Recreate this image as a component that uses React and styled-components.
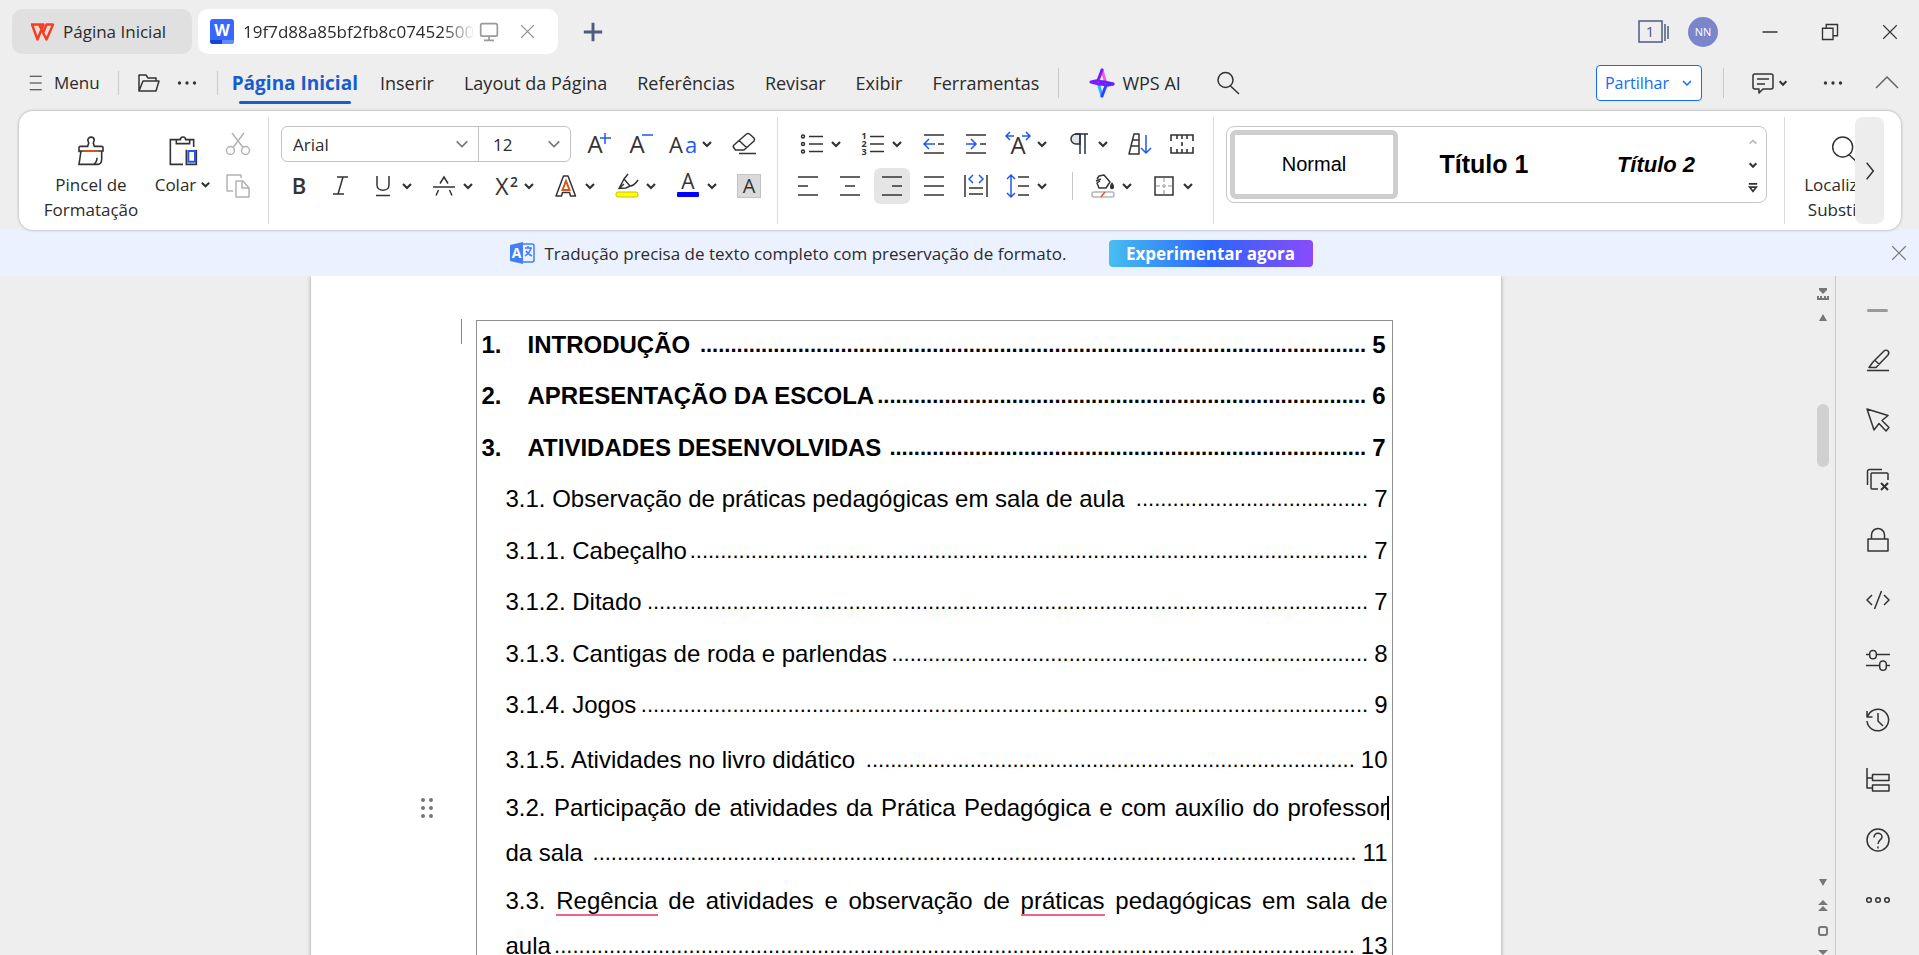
import React,{useState} from 'react'
import styled, {createGlobalStyle} from 'styled-components'

const uiFont = `'Open Sans', 'Noto Sans', sans-serif`
const docFont = `'Liberation Sans', Arial, sans-serif`

const tabs = ['Página Inicial','Inserir','Layout da Página','Referências','Revisar','Exibir','Ferramentas']

const misspelled = ['Regência', 'práticas']

const entries = [
  { number: '1.', text: 'INTRODUÇÃO', page: 5, dots: 109, main: true, gap: 6 },
  { number: '2.', text: 'APRESENTAÇÃO DA ESCOLA', page: 6, dots: 80, main: true, gap: 7 },
  { number: '3.', text: 'ATIVIDADES DESENVOLVIDAS', page: 7, dots: 78, main: true, gap: 6 },
  { text: '3.1. Observação de práticas pedagógicas em sala de aula', page: 7, dots: 38, gap: 7 },
  { text: '3.1.1. Cabeçalho', page: 7, dots: 111, gap: 6 },
  { text: '3.1.2. Ditado', page: 7, dots: 118, gap: 7 },
  { text: '3.1.3. Cantigas de roda e parlendas', page: 8, dots: 78, gap: 6 },
  { text: '3.1.4. Jogos', page: 9, dots: 119, gap: 10 },
  { text: '3.1.5. Atividades no livro didático', page: 10, dots: 80, gap: 3 },
  { first: '3.2. Participação de atividades da Prática Pedagógica e com auxílio do professor', caret: true, text: 'da sala', page: 11, dots: 125, gap: 3 },
  { first: '3.3. Regência de atividades e observação de práticas pedagógicas em sala de', text: 'aula', page: 13, dots: 131, gap: 3 },
]

/* ---------- icons ---------- */

const Icon = ({ size = 24, children, color = '#333', width = '1.5', ...rest }) => (
  <svg width={size} height={size} viewBox='0 0 24 24' fill='none' stroke={color} strokeWidth={width} aria-hidden='true' {...rest}>
    {children}
  </svg>
)

const Letter = ({ x = 12, y = 20, size = 22, color = '#333', children, ...rest }) => (
  <text x={x} y={y} fontSize={size} fill={color} stroke='none' textAnchor='middle' fontFamily={uiFont} {...rest}>{children}</text>
)

const Chevron = ({ size = 12, color = '#333', width = '2.2' }) => (
  <svg width={size} height={size} viewBox='0 0 12 12' fill='none' stroke={color} strokeWidth={width} aria-hidden='true'>
    <path d='M2 4l4 4 4-4' />
  </svg>
)

const CloseIcon = ({ size = 18, color = '#333' }) => (
  <Icon size={size} color={color}><path d='M3 3l18 18M21 3L3 21' /></Icon>
)

const WpsLogo = () => (
  <svg width='25' height='18' viewBox='0 0 25 18' fill='none' stroke='#fb3b1e' strokeWidth='2.4' strokeLinejoin='round' aria-hidden='true'>
    <path d='M1 1.500h12.500L7.500 16.500 2 1.500M9 1.500l7.500 15 6.500-15h-6.500L13.500 9' />
  </svg>
)

const WriterLogo = () => (
  <svg width='24' height='25' viewBox='0 0 24 25' aria-hidden='true'>
    <rect width='24' height='25' rx='3' fill='#3a66ff' />
    <path d='M0 21h12v4H3a3 3 0 0 1-3-3z' fill='#0f47d6' />
    <path d='M12 21h12v1a3 3 0 0 1-3 3h-9z' fill='#5e8eff' />
    <text x='12' y='17' fontSize='16' fontWeight='700' fill='#fff' textAnchor='middle' fontFamily={uiFont}>W</text>
  </svg>
)

const AiLogo = () => (
  <svg width='26' height='30' viewBox='0 0 26 30' fill='none' strokeWidth='3' strokeLinecap='round' strokeLinejoin='round' aria-hidden='true'>
    <path d='M13 2l3 10' stroke='#ee62da' />
    <path d='M13 28l-3-10' stroke='#27b8ff' />
    <path d='M2 14l7-1.500L13 2M2 14l8 2 5 .5' stroke='#7a1cff' />
    <path d='M24 16l-7 1.500L13 28' stroke='#3b3bff' />
    <path d='M24 16l-8-2-5-.5' stroke='#6a1dff' />
  </svg>
)

const MenuIcon = () => <Icon size={18}><path d='M5 3h16M5 12h16M5 21h16' /></Icon>

const FolderIcon = () => <Icon><path d='M2 20V4h7l2 3h8v3M2 20L6 10h16l-3 10z' strokeLinejoin='round' /></Icon>

const DotsIcon = ({ size = 20 }) => (
  <Icon size={size}><g fill='#333' stroke='none'><circle cx='3' cy='12' r='2' /><circle cx='12' cy='12' r='2' /><circle cx='21' cy='12' r='2' /></g></Icon>
)

const SearchIcon = ({ size = 24, width }) => <Icon size={size} width={width}><circle cx='9.500' cy='9' r='7.500' /><path d='M14.500 15l8.500 8' /></Icon>

const BrushIcon = () => (
  <Icon size={32}>
    <path d='M3 13V9.500a1 1 0 0 1 1-1h5.500l.8-2.500-.7-2a2.400 2.400 0 1 1 4.800 0l-.7 2 .8 2.500H20a1 1 0 0 1 1 1V12H3zM4.500 12L3 22h14c2 0 3-1.500 3-4V12M16.500 17c0 2-1 4-2.500 5' strokeWidth='1.200' />
    <path d='M6.500 12h11' stroke='#d4541b' />
  </Icon>
)

const PasteIcon = () => (
  <Icon size={32} width='1.200'>
    <path d='M7 3.500H2.500V22H12M17 3.500h3V9M7 3.500v3h10v-3h-3C14 .8 10 .8 10 3.500z' />
    <path d='M14.500 11v11H22V11' />
    <path d='M16 12h5v8h-5z' stroke='#2257f0' strokeWidth='1.500' />
  </Icon>
)

const CutIcon = () => <Icon color='#b3b3b3'><circle cx='4.500' cy='18.500' r='4' /><circle cx='19.500' cy='18.500' r='4' /><path d='M6 1l11 14.500M18 1L7 15.500' /></Icon>

const CopyIcon = () => <Icon color='#b3b3b3'><path d='M7 17H1V1h14v3M10 7h7l6 7v9H10zM16 7v7h7' strokeLinejoin='round' /></Icon>

const GrowIcon = () => <Icon><Letter x={8} y={21} size={24}>A</Letter><path d='M18 1v11M13 6h11' stroke='#2257f0' /></Icon>

const ShrinkIcon = () => <Icon><Letter x={8} y={21} size={24}>A</Letter><path d='M13 3h11' stroke='#2257f0' /></Icon>

const CaseIcon = () => <Icon><Letter x={5} y={21} size={22}>A</Letter><Letter x={20} y={21} size={22} color='#2257f0'>a</Letter></Icon>

const EraserIcon = () => <Icon><path d='M3.500 18h8.500L22 9c.7-1 .7-2 0-3l-4.500-4c-1-.8-2-.8-3 0L2 13c-1 1-1 2 0 3zM7 8.500l7.500 7M7 21.500h17' strokeLinejoin='round' /></Icon>

const BoldIcon = () => <Icon><Letter size={22} y={20} fontWeight='600'>B</Letter></Icon>

const ItalicIcon = () => <Icon><path d='M8 3h11M4 20h11M14 3L9 20' /></Icon>

const UnderlineIcon = () => <Icon><path d='M6 2v9c0 7 12 7 12 0V2M5 21.500h14' /></Icon>

const StrikeIcon = () => <Icon><path d='M1 13h22M8 9.500L12 3l4 6.500M6.500 16L4 21.500M17.500 16l2.500 5.500' /></Icon>

const SuperIcon = () => <Icon><Letter x={9} y={21} size={23}>X</Letter><Letter x={21} y={13} size={14} fontWeight='600'>2</Letter></Icon>

const OutlineIcon = () => (
  <Icon>
    <path d='M2 22L9.500 2h4.500L21.500 22h-5l-1-3.500h-7L7.500 22z' strokeLinejoin='round' />
    <path d='M8.500 16L12 7l3.500 9z' stroke='#d4541b' strokeWidth='2' />
  </Icon>
)

const HighlightIcon = () => (
  <Icon>
    <path d='M4 14.500L9 5l6 7-4 2zM9 5l4-5M15 12c4 0 6-3 8-6M9 10l-5 4.500' />
    <rect x='1' y='18' width='22' height='5' rx='2' fill='#ffff00' stroke='#c9c100' strokeWidth='1' />
  </Icon>
)

const FontColorIcon = () => (
  <Icon>
    <Letter y={15} size={21}>A</Letter>
    <rect x='1' y='18' width='22' height='5' rx='1' fill='#0000ff' stroke='none' />
  </Icon>
)

const ShadeIcon = () => (
  <Icon>
    <rect x='0.500' y='0.500' width='23' height='23' fill='#dadada' stroke='#c3c3c3' strokeWidth='1' />
    <Letter y={19} size={20}>A</Letter>
  </Icon>
)

const BulletsIcon = () => <Icon><g><circle cx='3' cy='4.500' r='1.500' /><circle cx='3' cy='12' r='1.500' /><circle cx='3' cy='19.500' r='1.500' /></g><path d='M9 4.500h14M9 12h14M9 19.500h14' /></Icon>

const NumbersIcon = () => (
  <Icon>
    <Letter x={3} y={7} size={9} fontWeight='700'>1</Letter>
    <Letter x={3} y={15} size={9} fontWeight='700'>2</Letter>
    <Letter x={3} y={23} size={9} fontWeight='700'>3</Letter>
    <path d='M9 4.500h14M9 12h14M9 19.500h14' />
  </Icon>
)

const OutdentIcon = () => <Icon><path d='M2 3h20M2 21h20M16 12h6' /><path d='M2 12h11M7 7l-5 5 5 5' stroke='#2257f0' /></Icon>

const IndentIcon = () => <Icon><path d='M2 3h20M2 21h20M16 12h6' /><path d='M2 12h10M7 7l5 5-5 5' stroke='#2257f0' /></Icon>

const TextWidthIcon = () => (
  <Icon>
    <Letter y={22} size={24}>A</Letter>
    <path d='M0 4h8M4 0L0 4l4 4M24 4h-8M20 0l4 4-4 4' stroke='#2257f0' />
  </Icon>
)

const PilcrowIcon = () => <Icon><path d='M13 2H9a5 5 0 0 0 0 10h4z' fill='#dfe3ea' /><path d='M13 2v20M18 2v20M8 2h13' stroke='#27314d' /></Icon>

const SortIcon = () => (
  <Icon>
    <path d='M1 22L6 2h5v20zM4.500 8H11M3 14h8' strokeLinejoin='round' />
    <path d='M18 3v18M13 16l5 5 5-5' stroke='#2257f0' />
  </Icon>
)

const TabStopIcon = () => <Icon width='1.600'><path d='M1 9V3h22v6M1 15v6h22v-6M7 3v4M12 3v4M17 3v4M7 21v-4M12 21v-4M17 21v-4M12 10v4' /></Icon>

const AlignIcon = ({ d }) => <Icon><path d={d} /></Icon>

const DistributeIcon = () => <Icon><path d='M1 1v22M23 1v22M5 14h14M5 20h14' /><path d='M9 1L5 5l4 4M15 1l4 4-4 4' stroke='#2257f0' /></Icon>

const SpacingIcon = () => <Icon><path d='M12 3h11M12 12h11M12 21h11' /><path d='M5 1v22M1 5l4-4 4 4M1 19l4 4 4-4' stroke='#2257f0' /></Icon>

const FillIcon = () => (
  <Icon>
    <path d='M6 5l2-3 5-1 6 7-4 6H8L6 9l3-2M5 7l5-2' strokeLinejoin='round' />
    <path d='M21 9.500c1.500 2 2 5 0 5s-1.500-3 0-5z' fill='#333' />
    <rect x='1' y='18' width='22' height='5' rx='2' stroke='#b5b5b5' />
    <path d='M10 23l4-5' stroke='#e2572b' />
  </Icon>
)

const BordersIcon = () => <Icon><path d='M3 3h18v18H3z' /><path d='M12 4v16M4 12h16' stroke='#b5b5b5' strokeDasharray='4 2' /></Icon>

const CommentIcon = () => <Icon><path d='M4 3h16a2 2 0 0 1 2 2v11a2 2 0 0 1-2 2h-8l-4 4v-4H4a2 2 0 0 1-2-2V5a2 2 0 0 1 2-2zM6 8h12M6 13h8' strokeLinejoin='round' /></Icon>

const TranslateIcon = () => (
  <svg width='25' height='22' viewBox='0 0 25 22' aria-hidden='true'>
    <path d='M0 3l13-3v22L0 19z' fill='#417ff9' />
    <path d='M13 2h9a2 2 0 0 1 2 2v14a2 2 0 0 1-2 2h-9' fill='none' stroke='#417ff9' strokeWidth='1.500' />
    <path d='M15 6h7M18 4v2M21 6c-1 4-3 6-6 8M16 9c2 3 4 4 6 5' fill='none' stroke='#417ff9' strokeWidth='1.500' />
    <text x='6.500' y='16' fontSize='14' fontWeight='700' fill='#fff' textAnchor='middle' fontFamily={uiFont}>A</text>
  </svg>
)

const sideTools = [
  ['Caneta', <path d='M1 22.500h22M3 19.500h7L22 7c1-1.500 1-3 0-4s-3-1-4 0L7 14zM9 12.500l4.500 4' />],
  ['Selecionar', <path d='M1 1l21 6.500-6 5L23 19.500 20 23l-7-7.500L8 22z' />],
  ['Cópias', <><path d='M1.500 17V3.500a2 2 0 0 1 2-2H16M12 21H6a1 1 0 0 1-1-1V6a1 1 0 0 1 1-1h15a1 1 0 0 1 1 1v6' /><path d='M15 15l7 7M22 15l-7 7' strokeWidth='2' /></>],
  ['Proteger', <path d='M2 11h20v12H2zM5.500 11V7a6.500 6.500 0 0 1 13 0v4' />],
  ['Código', <path d='M6 7l-5 5 5 5M18 7l5 5-5 5M15.500 3L8.500 21' />],
  ['Ajustes', <path d='M0 6.500h3.500M10.500 6.500H24M0 17.500h13.500M20.500 17.500H24M7 2.500a3 3 0 0 1 3.300 3v2a3 3 0 0 1-6.600 0v-2A3 3 0 0 1 7 2.500zM17 13a3 3 0 0 1 3.300 3v3a3 3 0 0 1-6.600 0v-3A3 3 0 0 1 17 13z' />],
  ['Histórico', <path d='M1 13a10.800 10.800 0 1 0 3-8.500L1 9M1 3v6h5.500M12 5v8l5 5' />],
  ['Navegação', <path d='M1 0v20h5M1 10h5M6.500 6.500H23v6H6.500zM6.500 17H23v6H6.500z' />],
  ['Ajuda', <><circle cx='12' cy='12' r='11' /><path d='M8 9.500c0-6 8-5 8-.5 0 3-4 3-4 7M12 18.500v2' /></>],
  ['Mais', <><circle cx='3' cy='12' r='2.300' /><circle cx='12' cy='12' r='2.300' /><circle cx='21' cy='12' r='2.300' /></>],
]

/* ---------- pieces ---------- */

const Tool = ({ label, drop, active, children }) => (
  <ToolButton type='button' aria-label={label} $drop={drop} $active={active}>
    <span>{children}</span>
    {drop ? <Chevron /> : null}
  </ToolButton>
)

const Entry = ({ number, first, caret, text, page, dots, main, gap }) => (
  <EntryBlock $main={main} $gap={gap}>
    { !first ? null:
      <Justified>
        {first.split(' ').map((word,index) => (
          <React.Fragment key={index}>
            {index ? ' ' : ''}
            {misspelled.includes(word) ? <Misspelled>{word}</Misspelled> : word}
          </React.Fragment>
        ))}
        {caret ? <Caret /> : null}
      </Justified>
    }
    <EntryLine>
      {number ? <Num>{number}</Num> : null}
      <span>{text}</span>
      <Leader aria-hidden='true'>{'.'.repeat(dots)}</Leader>
      <span>{page}</span>
    </EntryLine>
  </EntryBlock>
)

const App = () => {
  const [tab,setTab] = useState('Página Inicial')
  const [font,setFont] = useState('Arial')
  const [size,setSize] = useState('12')

  return (
    <Window>
      <GlobalStyle />
      <TitleBar>
        <FileTab type='button'>
          <WpsLogo />
          <span>Página Inicial</span>
        </FileTab>
        <OpenFile>
          <WriterLogo />
          <FileName>19f7d88a85bf2fb8c07452500</FileName>
          <Icon size={20} color='#999' width='2'><path d='M4 2h16a2 2 0 0 1 2 2v11a2 2 0 0 1-2 2H4a2 2 0 0 1-2-2V4a2 2 0 0 1 2-2zM12 17v4M6 22h12' /></Icon>
          <IconButton type='button' aria-label='Fechar separador'><CloseIcon size={17} color='#888' /></IconButton>
        </OpenFile>
        <NewTab type='button' aria-label='Novo separador'>
          <Icon size={20} color='#4c5b7e' width='3.500'><path d='M12 1v22M1 12h22' /></Icon>
        </NewTab>
        <WindowTools>
          <svg width='31' height='24' viewBox='0 0 31 24' fill='none' stroke='#4c5b7e' strokeWidth='1.500' aria-hidden='true'>
            <path d='M1 1h23v21H1zM27 4v17M30 6v13' />
            <text x='12' y='17' fontSize='15' fill='#4c5b7e' stroke='none' textAnchor='middle' fontFamily={uiFont}>1</text>
          </svg>
          <Avatar>NN</Avatar>
          <IconButton type='button' aria-label='Minimizar'><Icon size={18}><path d='M2 12h20' strokeWidth='2' /></Icon></IconButton>
          <IconButton type='button' aria-label='Restaurar'><Icon size={18} width='1.800'><path d='M2 7h14v15H2zM7 7V2h15v15h-6' /></Icon></IconButton>
          <IconButton type='button' aria-label='Fechar'><CloseIcon /></IconButton>
        </WindowTools>
      </TitleBar>

      <MenuBar>
        <MenuButton type='button'><MenuIcon /> Menu</MenuButton>
        <Bar $h={24} />
        <IconButton type='button' aria-label='Abrir'><FolderIcon /></IconButton>
        <IconButton type='button' aria-label='Mais'><DotsIcon /></IconButton>
        <Bar $h={24} />
        <TabList>
          {tabs.map((name) => (
            <MenuTab key={name} type='button' $active={name === tab} onClick={() => setTab(name)}>{name}</MenuTab>
          ))}
        </TabList>
        <Bar $h={30} />
        <AiButton type='button'><AiLogo /> WPS AI</AiButton>
        <IconButton type='button' aria-label='Pesquisar'><SearchIcon /></IconButton>
        <MenuRight>
          <ShareButton type='button'>Partilhar <Chevron color='#0f6bff' width='1.500' /></ShareButton>
          <Bar $h={30} />
          <CommentButton type='button' aria-label='Comentários'><CommentIcon /><Chevron size={10} width='2.500' /></CommentButton>
          <IconButton type='button' aria-label='Mais opções'><DotsIcon /></IconButton>
          <IconButton type='button' aria-label='Recolher'><Icon color='#666'><path d='M1 17L12 6l11 11' /></Icon></IconButton>
        </MenuRight>
      </MenuBar>

      <Ribbon>
        <Clipboard>
          <BigButton type='button' $w={96}><BrushIcon />Pincel de Formatação</BigButton>
          <BigButton type='button' $w={74}><PasteIcon /><span>Colar <Chevron size={11} /></span></BigButton>
          <ToolColumn>
            <IconButton type='button' aria-label='Cortar'><CutIcon /></IconButton>
            <IconButton type='button' aria-label='Copiar'><CopyIcon /></IconButton>
          </ToolColumn>
        </Clipboard>

        <FontGroup>
          <ToolRow $lead={3}>
            <Combo>
              <Picker $w={196}>
                <select aria-label='Tipo de letra' value={font} onChange={(e) => setFont(e.target.value)}>
                  <option>Arial</option>
                  <option>Times New Roman</option>
                </select>
                <Chevron size={16} color='#777' width='1.200' />
              </Picker>
              <Picker $w={92}>
                <select aria-label='Tamanho' value={size} onChange={(e) => setSize(e.target.value)}>
                  <option>12</option>
                  <option>14</option>
                </select>
                <Chevron size={16} color='#777' width='1.200' />
              </Picker>
            </Combo>
            <Tool label='Aumentar letra'><GrowIcon /></Tool>
            <Tool label='Diminuir letra'><ShrinkIcon /></Tool>
            <Tool label='Maiúsculas' drop><CaseIcon /></Tool>
            <Tool label='Limpar formatação'><EraserIcon /></Tool>
          </ToolRow>
          <ToolRow>
            <Tool label='Negrito'><BoldIcon /></Tool>
            <Tool label='Itálico'><ItalicIcon /></Tool>
            <Tool label='Sublinhado' drop><UnderlineIcon /></Tool>
            <Tool label='Rasurado' drop><StrikeIcon /></Tool>
            <Tool label='Sobrescrito' drop><SuperIcon /></Tool>
            <Tool label='Efeitos' drop><OutlineIcon /></Tool>
            <Tool label='Realce' drop><HighlightIcon /></Tool>
            <Tool label='Cor da letra' drop><FontColorIcon /></Tool>
            <Tool label='Sombreado'><ShadeIcon /></Tool>
          </ToolRow>
        </FontGroup>

        <ParagraphGroup>
          <ToolRow $lead={5}>
            <Tool label='Marcas' drop><BulletsIcon /></Tool>
            <Tool label='Numeração' drop><NumbersIcon /></Tool>
            <Tool label='Diminuir recuo'><OutdentIcon /></Tool>
            <Tool label='Aumentar recuo'><IndentIcon /></Tool>
            <Tool label='Largura do texto' drop><TextWidthIcon /></Tool>
            <Tool label='Marcas de parágrafo' drop><PilcrowIcon /></Tool>
            <Tool label='Ordenar'><SortIcon /></Tool>
            <Tool label='Tabulações'><TabStopIcon /></Tool>
          </ToolRow>
          <ToolRow $lead={1}>
            <Tool label='Alinhar à esquerda'><AlignIcon d='M2 3h20M2 12h10M2 21h20' /></Tool>
            <Tool label='Centrar'><AlignIcon d='M2 3h20M7 12h10M2 21h20' /></Tool>
            <Tool label='Alinhar à direita' active><AlignIcon d='M2 3h20M12 12h10M2 21h20' /></Tool>
            <Tool label='Justificar'><AlignIcon d='M2 3h20M2 12h20M2 21h20' /></Tool>
            <Tool label='Distribuir'><DistributeIcon /></Tool>
            <Tool label='Espaçamento' drop><SpacingIcon /></Tool>
            <Bar $h={28} />
            <Tool label='Preenchimento' drop><FillIcon /></Tool>
            <Tool label='Limites' drop><BordersIcon /></Tool>
          </ToolRow>
        </ParagraphGroup>

        <StyleGroup>
          <Gallery>
            <StyleItem type='button' $active>Normal</StyleItem>
            <StyleItem type='button' $title>Título 1</StyleItem>
            <StyleItem type='button' $subtitle>Título 2</StyleItem>
            <GalleryArrows>
              <button type='button' aria-label='Anterior'><svg width='10' height='10' viewBox='0 0 12 12' fill='none' stroke='#bbb' strokeWidth='2'><path d='M2 8l4-4 4 4' /></svg></button>
              <button type='button' aria-label='Seguinte'><Chevron size={10} width='2.500' /></button>
              <button type='button' aria-label='Mais estilos'><svg width='10' height='10' viewBox='0 0 12 12' fill='none' stroke='#333' strokeWidth='2'><path d='M1 1h10M2 5h8l-4 5z' /></svg></button>
            </GalleryArrows>
          </Gallery>
        </StyleGroup>

        <FindGroup>
          <BigButton type='button' $w={96}><SearchIcon size={32} width='1.100' />Localizar e Substituir</BigButton>
        </FindGroup>
        <NextButton type='button' aria-label='Mais ferramentas'>
          <Icon size={20} width='1.800'><path d='M8 2l8 10-8 10' /></Icon>
        </NextButton>
      </Ribbon>

      <Banner>
        <TranslateIcon />
        <p>Tradução precisa de texto completo com preservação de formato.</p>
        <TryButton type='button'>Experimentar agora</TryButton>
        <BannerClose type='button' aria-label='Fechar aviso'><CloseIcon size={18} color='#777' /></BannerClose>
      </Banner>

      <Workspace>
        <Canvas>
          <Page>
            <CornerMark />
            <Handle aria-hidden='true'>
              <svg width='14' height='22' viewBox='0 0 14 22' fill='#777'>
                <circle cx='3' cy='3' r='2' /><circle cx='11' cy='3' r='2' />
                <circle cx='3' cy='11' r='2' /><circle cx='11' cy='11' r='2' />
                <circle cx='3' cy='19' r='2' /><circle cx='11' cy='19' r='2' />
              </svg>
            </Handle>
            <Contents>
              {entries.map((entry) => <Entry key={entry.text} {...entry} />)}
            </Contents>
          </Page>
        </Canvas>
        <ScrollBar>
          <svg width='12' height='12' viewBox='0 0 12 12' fill='#777' aria-hidden='true'><path d='M2 0h8v2L6 6 2 2zM0 8h2v2h1V8h2v2h2V8h2v2h1V8h2v4H0z' /></svg>
          <svg width='8' height='7' viewBox='0 0 8 7' fill='#777' aria-hidden='true'><path d='M4 0l4 7H0z' /></svg>
          <Track><Thumb /></Track>
          <svg width='8' height='7' viewBox='0 0 8 7' fill='#777' aria-hidden='true'><path d='M4 7l4-7H0z' /></svg>
          <svg width='10' height='12' viewBox='0 0 10 12' fill='#777' aria-hidden='true'><path d='M5 0l5 5H0zM5 6l5 5H0z' /></svg>
          <svg width='10' height='10' viewBox='0 0 10 10' fill='none' stroke='#777' strokeWidth='2' aria-hidden='true'><rect x='1' y='1' width='8' height='8' rx='2' /></svg>
          <svg width='10' height='5' viewBox='0 0 10 5' fill='#777' aria-hidden='true'><path d='M0 0h10L5 5z' /></svg>
        </ScrollBar>
        <SideBar>
          <Dash />
          {sideTools.map(([label,shape]) => (
            <IconButton key={label} type='button' aria-label={label}>
              <Icon strokeLinejoin='round'>{shape}</Icon>
            </IconButton>
          ))}
        </SideBar>
      </Workspace>
    </Window>
  )
}

export default App

const GlobalStyle = createGlobalStyle`
    *{
        box-sizing: border-box;
    }
    body{
        margin: 0;
        background: #eee;
        color: #2b2b2b;
        font-family: ${uiFont};
        font-size: 17px;
    }
    button, select{
        font: inherit;
        color: inherit;
        background: none;
        border: 0;
        padding: 0;
        margin: 0;
        cursor: pointer;
    }
    svg{
        display: block;
        flex-shrink: 0;
        overflow: visible;
    }
`

const Window = styled.div`
    display: flex;
    flex-direction: column;
    height: 100vh;
    overflow: hidden;
`

const Bar = styled.span`
    width: 1px;
    height: ${({ $h }) => $h}px;
    background: #c8c8c8;
    flex-shrink: 0;
`

const IconButton = styled.button`
    display: flex;
    align-items: center;
    justify-content: center;
    width: 36px;
    height: 36px;
    flex-shrink: 0;
`

const TitleBar = styled.header`
    display: flex;
    align-items: center;
    padding: 9px 11px 0 12px;
    height: 54px;
    flex-shrink: 0;
`

const FileTab = styled.button`
    display: flex;
    align-items: center;
    gap: 8px;
    width: 180px;
    height: 45px;
    padding-left: 18px;
    margin-right: 6px;
    border-radius: 10px;
    background: #e0e0e0;
`

const OpenFile = styled.div`
    display: flex;
    align-items: center;
    width: 360px;
    height: 45px;
    padding-left: 12px;
    border-radius: 10px;
    background: #fff;
    & > button{
        margin-left: 10px;
    }
`

const FileName = styled.span`
    width: 232px;
    margin: 0 4px 0 9px;
    overflow: hidden;
    white-space: nowrap;
    mask-image: linear-gradient(90deg, #000 86%, transparent);
`

const NewTab = styled(IconButton)`
    margin-left: 17px;
`

const WindowTools = styled.div`
    display: flex;
    align-items: center;
    margin-left: auto;
    & > button{
        margin-left: 24px;
    }
    & > button:first-of-type{
        margin-left: 34px;
    }
`

const Avatar = styled.span`
    display: flex;
    align-items: center;
    justify-content: center;
    width: 30px;
    height: 30px;
    margin-left: 19px;
    border-radius: 50%;
    background: #7a86cc;
    color: #fff;
    font-size: 11px;
`

const MenuBar = styled.nav`
    display: flex;
    align-items: center;
    height: 57px;
    padding: 0 14px 0 26px;
    flex-shrink: 0;
    & > ${IconButton}{
        margin-left: 12px;
    }
    & > ${IconButton} + ${IconButton}{
        margin: 0 12px 0 2px;
    }
`

const MenuButton = styled.button`
    display: flex;
    align-items: center;
    gap: 10px;
    margin-right: 18px;
`

const TabList = styled.div`
    display: flex;
    gap: 30px;
    padding: 0 19px 0 14px;
`

const MenuTab = styled.button`
    display: flex;
    flex-direction: column;
    align-items: center;
    height: 40px;
    line-height: 40px;
    font-size: ${({ $active }) => $active ? 19 : 18}px;
    white-space: nowrap;
    font-weight: ${({ $active }) => $active ? 700 : 400};
    color: ${({ $active }) => $active ? '#1a5ccc' : 'inherit'};
    margin-right: ${({ $active }) => $active ? -8 : 0}px;
    &::after{
        content: '';
        width: calc(100% - 14px);
        height: 3px;
        margin-top: -2px;
        border-radius: 2px;
        flex-shrink: 0;
        background: ${({ $active }) => $active ? '#1a5ccc' : 'transparent'};
    }
`

const AiButton = styled.button`
    display: flex;
    align-items: center;
    gap: 7px;
    margin: 0 17px 0 30px;
    font-size: 18px;
    white-space: nowrap;
`

const MenuRight = styled.div`
    display: flex;
    align-items: center;
    margin-left: auto;
    gap: 21px;
    & > ${IconButton}:last-child{
        margin-left: -3px;
    }
`

const ShareButton = styled.button`
    display: flex;
    align-items: center;
    justify-content: center;
    gap: 12px;
    width: 106px;
    height: 36px;
    border: 1px solid #0f6bff;
    border-radius: 4px;
    background: #fff;
    color: #0f6bff;
    font-size: 16px;
`

const CommentButton = styled.button`
    display: flex;
    align-items: center;
    gap: 3px;
    margin: 0 6px;
`

const Ribbon = styled.section`
    display: flex;
    position: relative;
    z-index: 2;
    margin: 0 18px 0 19px;
    padding: 6px 17px 6px 24px;
    border-radius: 14px;
    background: #fff;
    box-shadow: 0 0 3px rgba(0, 0, 0, 0.35);
    flex-shrink: 0;
`

const Group = styled.div`
    padding-top: 9px;
    height: 107px;
    border-right: 1px solid #d9d9d9;
    flex-shrink: 0;
`

const Clipboard = styled(Group)`
    display: flex;
    width: 226px;
`

const BigButton = styled.button`
    display: flex;
    flex-direction: column;
    align-items: center;
    align-self: flex-start;
    gap: 5px;
    width: ${({ $w }) => $w}px;
    padding-top: 9px;
    line-height: 25px;
    flex-shrink: 0;
    & + &{
        margin-left: 7px;
    }
    span{
        display: flex;
        align-items: center;
        gap: 4px;
    }
`

const ToolColumn = styled.div`
    display: flex;
    flex-direction: column;
    gap: 6px;
`

const FontGroup = styled(Group)`
    width: 509px;
    padding-left: 9px;
`

const ParagraphGroup = styled(Group)`
    width: 436px;
    padding-left: 8px;
`

const ToolRow = styled.div`
    display: flex;
    align-items: center;
    padding-left: ${({ $lead }) => $lead || 0}px;
    & + &{
        margin-top: 6px;
    }
    & > ${Bar}{
        margin: 0 9px 0 14px;
    }
`

const ToolButton = styled.button`
    display: flex;
    align-items: center;
    width: ${({ $drop }) => $drop ? 61 : 42}px;
    height: 36px;
    flex-shrink: 0;
    & > span{
        display: flex;
        align-items: center;
        justify-content: center;
        width: 36px;
        height: 36px;
        margin: 0 0 0 3px;
        border-radius: 6px;
        background: ${({ $active }) => $active ? '#e5e5e5' : 'transparent'};
    }
`

const Combo = styled.div`
    display: flex;
    height: 36px;
    margin-right: 7px;
    border: 1px solid #c3c3c3;
    border-radius: 6px;
`

const Picker = styled.label`
    display: flex;
    align-items: center;
    width: ${({ $w }) => $w}px;
    padding: 0 8px 0 11px;
    & + &{
        border-left: 1px solid #c3c3c3;
        padding-left: 14px;
    }
    select{
        flex: 1;
        appearance: none;
        outline: none;
    }
`

const StyleGroup = styled(Group)`
    width: 571px;
    padding-left: 12px;
`

const Gallery = styled.div`
    display: flex;
    width: 541px;
    height: 77px;
    padding: 3px;
    border: 1px solid #c6c6c6;
    border-radius: 8px;
`

const StyleItem = styled.button`
    width: 168px;
    height: 69px;
    border-radius: 6px;
    color: #000;
    font-family: ${docFont};
    font-size: ${({ $title, $subtitle }) => $title ? 25 : $subtitle ? 22 : 20}px;
    font-weight: ${({ $title, $subtitle }) => $title || $subtitle ? 700 : 400};
    font-style: ${({ $subtitle }) => $subtitle ? 'italic' : 'normal'};
    border: ${({ $active }) => $active ? '5px solid #cecece' : '0'};
    & + &{
        width: 172px;
    }
`

const GalleryArrows = styled.div`
    display: flex;
    flex-direction: column;
    justify-content: space-around;
    align-items: center;
    width: 20px;
    padding-left: 2px;
`

const FindGroup = styled.div`
    display: flex;
    flex: 1;
    min-width: 0;
    padding: 9px 0 0 13px;
    overflow: hidden;
`

const NextButton = styled.button`
    display: flex;
    align-items: center;
    justify-content: center;
    width: 29px;
    border-radius: 8px;
    background: #ededed;
    flex-shrink: 0;
`

const Banner = styled.aside`
    display: flex;
    align-items: center;
    justify-content: center;
    position: relative;
    height: 46px;
    padding: 0 96px 0 0;
    background: #ebf1fe;
    flex-shrink: 0;
    p{
        margin: 0 42px 0 9px;
        white-space: nowrap;
    }
`

const TryButton = styled.button`
    height: 27px;
    width: 204px;
    border-radius: 4px;
    background: linear-gradient(90deg, #45bff0, #2b66ff 50%, #8a4bfa);
    color: #fff;
    font-weight: 700;
    line-height: 27px;
`

const BannerClose = styled(IconButton)`
    position: absolute;
    right: 2px;
    top: 5px;
`

const Workspace = styled.main`
    display: flex;
    flex: 1;
    min-height: 0;
`

const Canvas = styled.div`
    flex: 1;
    display: flex;
    justify-content: center;
    align-items: flex-start;
    overflow: hidden;
`

const Page = styled.article`
    position: relative;
    width: 1190px;
    max-width: 100%;
    padding: 44px 108px 0 165px;
    background: #fff;
    box-shadow: 0 0 4px rgba(0, 0, 0, 0.35);
`

const CornerMark = styled.i`
    position: absolute;
    left: 150px;
    top: 43px;
    width: 1px;
    height: 25px;
    background: #888;
`

const Handle = styled.span`
    position: absolute;
    left: 109px;
    top: 521px;
`

const Contents = styled.div`
    padding: 1px 4px 40px 5px;
    border: 1px solid #8f8f8f;
    color: #000;
    font-family: ${docFont};
    font-size: 24px;
    line-height: 45px;
`

const EntryBlock = styled.div`
    padding-left: ${({ $main }) => $main ? 0 : 24}px;
    padding-right: ${({ $main }) => $main ? 2 : 0}px;
    margin-bottom: ${({ $gap }) => $gap}px;
    font-weight: ${({ $main }) => $main ? 700 : 400};
`

const EntryLine = styled.div`
    display: flex;
    white-space: nowrap;
`

const Justified = styled.div`
    position: relative;
    text-align: justify;
    text-align-last: justify;
`

const Num = styled.span`
    width: 46px;
    flex-shrink: 0;
`

const Leader = styled.span`
    flex: 1;
    margin-right: 6px;
    text-align: right;
    font-size: 22px;
`

const Caret = styled.i`
    position: absolute;
    right: -1px;
    top: 11px;
    width: 2px;
    height: 24px;
    background: #000;
`

const Misspelled = styled.span`
    border-bottom: 2px solid #f0648c;
`

const ScrollBar = styled.div`
    display: flex;
    flex-direction: column;
    align-items: center;
    gap: 14px;
    width: 24px;
    padding-top: 12px;
    flex-shrink: 0;
`

const Track = styled.div`
    flex: 1;
    padding-top: 69px;
`

const Thumb = styled.div`
    width: 12px;
    height: 63px;
    border-radius: 6px;
    background: #d0d0d0;
`

const SideBar = styled.aside`
    display: flex;
    flex-direction: column;
    align-items: center;
    gap: 24px;
    width: 84px;
    border-left: 1px solid #c8c8c8;
    padding-top: 33px;
    flex-shrink: 0;
`

const Dash = styled.span`
    width: 21px;
    height: 3px;
    margin-bottom: 6px;
    border-radius: 2px;
    background: #999;
`
